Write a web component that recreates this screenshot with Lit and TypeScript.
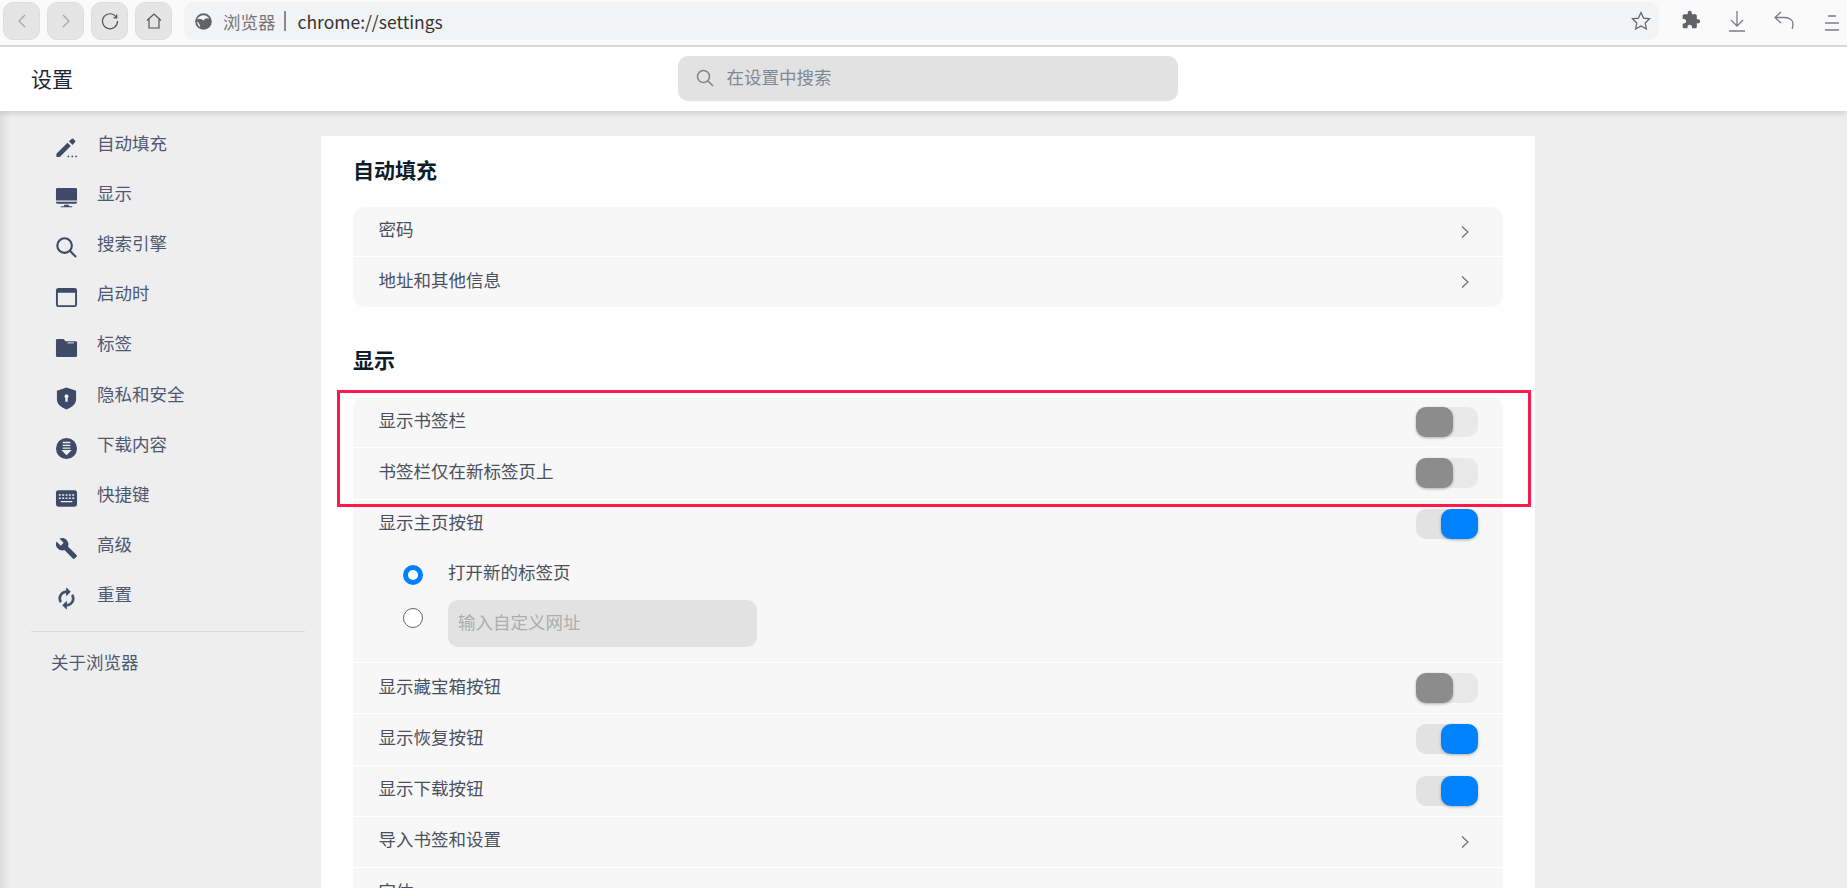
import { LitElement, html, css, svg } from 'lit';
import { customElement } from 'lit/decorators.js';

const NAV = [
  { label: '自动填充', icon: svg`<path d="M1.500 18.500V22h3.500L16.500 10.500l-3.500-3.500L1.500 18.500zM21 6.300a1 1 0 0 0 0-1.400L19 2.900a1 1 0 0 0-1.400 0l-3.100 2.600 3.800 3.800L21 6.300z"/><circle cx="14" cy="21.300" r=".9"/><circle cx="18" cy="21.300" r=".9"/><circle cx="22" cy="21.300" r=".9"/>` },
  { label: '显示', icon: svg`<path d="M2.500 2h19A1.500 1.500 0 0 1 23 3.500V15H1V3.500A1.500 1.500 0 0 1 2.500 2zM1 16.500h22V17a1.500 1.500 0 0 1-1.500 1.500h-19A1.500 1.500 0 0 1 1 17zM9.500 19.500h5V21H18v1.200H6V21h3.500z"/>` },
  { label: '搜索引擎', icon: svg`<circle cx="10" cy="10" r="7.600" fill="none" stroke="currentColor" stroke-width="2.200"/><path d="M15.500 15.500l6.500 6.500" fill="none" stroke="currentColor" stroke-width="2.200"/>` },
  { label: '启动时', icon: svg`<path fill-rule="evenodd" d="M3.500 2h17A2.500 2.500 0 0 1 23 4.500v15a2.500 2.500 0 0 1-2.500 2.500h-17A2.500 2.500 0 0 1 1 19.500v-15A2.500 2.500 0 0 1 3.500 2zM3 7v12.500c0 .300.200.500.500.500h17c.300 0 .500-.200.500-.500V7z"/>` },
  { label: '标签', icon: svg`<path d="M2.500 3H9l2 2.500h10.500A1.500 1.500 0 0 1 23 7v13.500a1.500 1.500 0 0 1-1.500 1.500h-19A1.500 1.500 0 0 1 1 20.500v-16A1.500 1.500 0 0 1 2.500 3z"/><path d="M13 7.200h6.500" stroke="#eee" stroke-width="1" fill="none"/>` },
  { label: '隐私和安全', icon: svg`<path fill-rule="evenodd" d="M12 .5l10 3.500v9c0 4.500-4 8-10 10.500C6 21 2 17.500 2 13V4zM12 7.500a2.200 2.200 0 0 0-1.200 4v3.800h2.400v-3.800a2.200 2.200 0 0 0-1.200-4z"/>` },
  { label: '下载内容', icon: svg`<path fill-rule="evenodd" d="M12 1a11 11 0 1 1 0 22 11 11 0 0 1 0-22zM8 5v1.500h8V5zM8 8v1.500h8V8zM8 11v1.200h8V11zM6.500 13.500L12 19l5.500-5.500z"/>` },
  { label: '快捷键', icon: svg`<path fill-rule="evenodd" d="M3 3.500h18A2.500 2.500 0 0 1 23 6v12a2.500 2.500 0 0 1-2.500 2.500h-17A2.500 2.500 0 0 1 1 18V6a2.500 2.500 0 0 1 2-2.500zM4 7.500V9h2V7.500zM7.500 7.500V9h2V7.500zM11 7.500V9h2V7.500zM14.500 7.500V9h2V7.500zM18 7.500V9h2V7.500zM4 11v1.500h2V11zM7.500 11v1.500h2V11zM11 11v1.500h2V11zM14.500 11v1.500h2V11zM18 11v1.500h2V11zM6 14.500V16h12v-1.500z"/>` },
  { label: '高级', icon: svg`<path d="M22.700 19l-9.100-9.100c.9-2.300.4-5-1.500-6.900-2-2-5-2.400-7.400-1.300L9 6 6 9 1.600 4.700C.4 7.100.9 10.100 2.900 12.100c1.900 1.900 4.600 2.400 6.900 1.500l9.100 9.100c.4.400 1 .4 1.400 0l2.300-2.300c.5-.4.5-1.100.1-1.400z"/>` },
  { label: '重置', icon: svg`<path d="M12 6v3l4-4-4-4v3c-4.420 0-8 3.580-8 8 0 1.570.46 3.030 1.240 4.260L6.700 14.800c-.45-.83-.7-1.790-.7-2.800 0-3.310 2.690-6 6-6zm6.760 1.740L17.300 9.200c.44.84.7 1.790.7 2.800 0 3.310-2.690 6-6 6v-3l-4 4 4 4v-3c4.420 0 8-3.580 8-8 0-1.570-.46-3.030-1.240-4.260z" stroke="currentColor" stroke-width=".8"/>` },
];

const chevron = html`<svg class="chev" viewBox="0 0 12 16"><path d="M3 2.500l6 5.500-6 5.500" /></svg>`;

const toggle = (on: boolean) => html`<span class="toggle ${on ? 'on' : ''}"><span class="knob"></span></span>`;

@customElement('app-root')
export class AppRoot extends LitElement {
  static styles = css`
    :host {
      display: flex;
      flex-direction: column;
      height: 100vh;
      overflow: hidden;
      background: #eee;
      color: #4a5060;
      font-family: "Noto Sans CJK SC", "Noto Sans", sans-serif;
      font-size: 17.500px;
    }
    svg { display: block; }

    /* browser chrome */
    .toolbar {
      flex: none;
      box-sizing: border-box;
      height: 47px;
      padding: 2px 0 0 3px;
      display: flex;
      background: #fafafa;
      border-bottom: 2px solid #dcdce0;
    }
    .tb-btn {
      box-sizing: border-box;
      width: 37px;
      height: 38px;
      margin-right: 7px;
      border: 1px solid #dedede;
      border-radius: 10px;
      background: #e5e5e5;
      display: flex;
      align-items: center;
      justify-content: center;
    }
    .tb-btn svg { fill: none; stroke: #555; stroke-width: 1.200; }
    .tb-btn.off svg { stroke: #a5a5a5; }
    .omnibox {
      width: 1475px;
      height: 38px;
      margin-left: 5px;
      box-sizing: border-box;
      padding: 0 7px 0 11px;
      display: flex;
      align-items: center;
      background: #f1f3f5;
      border-radius: 10px;
    }
    .globe { margin-right: 11px; }
    .site { color: #777; }
    .omni-sep { width: 2px; height: 20px; background: #8a8a8a; margin: 0 12px 0 8px; }
    .url { flex: 1; color: #333; }
    .star { fill: none; stroke: #5f6368; stroke-width: 1.200; }
    .tb-icons { display: flex; align-items: center; margin-left: 22px; gap: 27px; height: 38px; }
    .puzzle { fill: #5f6368; margin-top: -2px; }
    .line-ic { fill: none; stroke: #7a7d82; stroke-width: 1.300; }
    .menu-ic { margin: 3px 0 0 3px; }

    /* settings header */
    .header {
      flex: none;
      position: relative;
      z-index: 2;
      height: 64px;
      display: flex;
      align-items: center;
      background: #fff;
      box-shadow: 0 2px 6px rgba(0, 0, 0, 0.14);
    }
    .header h1 {
      width: 646.500px;
      margin: 0 0 2px 31px;
      font-size: 21px;
      font-weight: 400;
      color: #1c2733;
    }
    .search {
      box-sizing: border-box;
      width: 500.500px;
      height: 45px;
      margin-bottom: 2px;
      padding-left: 17px;
      display: flex;
      align-items: center;
      gap: 12px;
      background: #e2e2e2;
      border-radius: 10px;
      color: #7f8794;
    }
    .search svg { fill: none; stroke: #858585; stroke-width: 1.600; }
    .search span { margin-bottom: 3px; }

    /* body */
    .body {
      flex: 1;
      min-height: 0;
      display: grid;
      grid-template-columns: 321px 1214px;
    }
    .side {
      padding: 11px 16px 0 31px;
      background: linear-gradient(90deg, #dcdcdc 0, #eee 10px);
    }
    .nav-item {
      height: 50.200px;
      display: flex;
      align-items: center;
      gap: 19px;
      padding-left: 24px;
      color: #4f5873;
    }
    .nav-item span { margin-bottom: 10px; }
    .nav-item svg { width: 23px; height: 23px; fill: #3f4a69; color: #3f4a69; }
    .side hr {
      margin: 7px 0 0;
      border: 0;
      border-top: 1px solid #d9d9d9;
    }
    .about { margin: 17px 0 0 20px; color: #4f5873; }

    .main {
      margin-top: 25px;
      padding: 0 32px;
      background: #fff;
      overflow: hidden;
    }
    .main h2 {
      margin: 0;
      height: 71px;
      padding-top: 15px;
      box-sizing: border-box;
      font-size: 21px;
      font-weight: 700;
      line-height: 36px;
      color: #0f1c2a;
    }
    .group {
      margin-bottom: 19px;
      background: #f7f7f7;
      border-radius: 12px;
    }
    .row {
      box-sizing: border-box;
      height: 51.250px;
      padding: 0 25px 0 25.500px;
      display: flex;
      align-items: center;
      justify-content: space-between;
      border-bottom: 1px solid #fff;
    }
    .row > span:first-child { margin-bottom: 6px; }
    .row:last-child { border-bottom: 0; }
    .group.compact .row { height: 50px; }
    .chev { width: 12px; height: 16px; fill: none; stroke: #666; stroke-width: 1.100; margin-right: 7px; }

    .toggle {
      position: relative;
      width: 62px;
      height: 30px;
      border-radius: 10px;
      background: #e9e9e9;
    }
    .toggle.on { background: #e2e2e2; }
    .knob {
      position: absolute;
      left: 0;
      top: 0;
      width: 37px;
      height: 30px;
      border-radius: 10px;
      background: #8c8c8c;
      box-shadow: 0 1px 3px rgba(0, 0, 0, 0.3);
    }
    .toggle.on .knob { left: 25px; background: #0082ff; }

    .home-opts {
      box-sizing: border-box;
      height: 163.500px;
      border-bottom: 1px solid #fff;
    }
    .home-opts .row { border-bottom: 0; height: 49px; }
    .radio-line {
      display: flex;
      align-items: center;
      padding-left: 50px;
      gap: 25px;
    }
    .radio-line.first { height: 42px; margin-top: 5px; }
    .radio-line.first span:last-child { margin-bottom: 7px; }
    .radio-line.second { align-items: flex-start; margin-top: 4px; }
    .radio {
      box-sizing: border-box;
      width: 20px;
      height: 20px;
      border-radius: 50%;
      background: #fff;
      border: 1px solid #666;
    }
    .radio.checked { border: 5.500px solid #0082ff; }
    .radio-line.second .radio { margin-top: 8px; }
    .url-input {
      box-sizing: border-box;
      width: 309px;
      height: 47px;
      padding: 0 0 4px 10px;
      display: flex;
      align-items: center;
      background: #e2e2e2;
      border-radius: 10px;
      color: #adadad;
    }

    /* highlight drawn over the screenshot */
    .mark {
      position: absolute;
      left: 337px;
      top: 390px;
      box-sizing: border-box;
      width: 1194px;
      height: 117px;
      border: 3px solid #ff1a4b;
      pointer-events: none;
    }
  `;

  render() {
    return html`
      <div class="toolbar">
        <div class="tb-btn off"><svg width="16" height="18" viewBox="0 0 16 18"><path d="M11 3L5 9l6 6"/></svg></div>
        <div class="tb-btn off"><svg width="16" height="18" viewBox="0 0 16 18"><path d="M5 3l6 6-6 6"/></svg></div>
        <div class="tb-btn"><svg width="20" height="20" viewBox="0 0 20 20"><path d="M16.500 6.500A7.500 7.500 0 1 0 17.500 10M13.500 6.800h3.200V3.500"/></svg></div>
        <div class="tb-btn"><svg width="20" height="20" viewBox="0 0 20 20"><path d="M3 9.500L10 3l7 6.500M5 8.500V17h10V8.500"/></svg></div>
        <div class="omnibox">
          <svg class="globe" width="17" height="17" viewBox="0 0 17 17"><circle cx="8.500" cy="8.500" r="8.300" fill="#5f6368"/><path d="M2.200 6.500C3 3.800 5.500 2.200 8.500 2.200c2.500 0 4.700 1.400 5.700 3.500-1.500-.8-3.500-.7-4.500.3-.5.500-.7 1-.7 1.700C7.500 6.400 4.500 5.600 2.200 6.500z" fill="#f4f4f4"/><path d="M2.100 8.200c1.500 1.200 3 3.500 3.200 6-1.900-1.200-3.200-3.400-3.200-6z" fill="#f4f4f4"/></svg>
          <span class="site">浏览器</span>
          <span class="omni-sep"></span>
          <span class="url">chrome://settings</span>
          <svg class="star" width="22" height="22" viewBox="0 0 22 22"><path d="M11 2.500l2.600 5.600 6 .7-4.400 4.200 1.200 6L11 16l-5.400 3 1.200-6-4.400-4.200 6-.7z"/></svg>
        </div>
        <div class="tb-icons">
          <svg class="puzzle" width="20" height="20" viewBox="0 0 24 24"><path d="M20.500 11H19V7c0-1.100-.9-2-2-2h-4V3.500C13 2.120 11.880 1 10.500 1S8 2.120 8 3.500V5H4c-1.100 0-1.990.9-1.990 2v3.800H3.500c1.490 0 2.700 1.210 2.700 2.700s-1.210 2.700-2.700 2.700H2V20c0 1.100.9 2 2 2h3.800v-1.500c0-1.490 1.210-2.700 2.700-2.700 1.490 0 2.700 1.210 2.700 2.700V22H17c1.100 0 2-.9 2-2v-4h1.500c1.380 0 2.500-1.120 2.500-2.500S21.880 11 20.500 11z"/></svg>
          <svg class="line-ic" width="18" height="24" viewBox="0 0 18 24"><path d="M9 2v15M3 11l6 6 6-6M1 22h16"/></svg>
          <svg class="line-ic" width="22" height="22" viewBox="0 0 22 22"><path d="M8 2L2 7.500l6 5.500M2 7.500h10c4.500 0 8 2.500 8 6.500 0 2-.3 3.500-1 5"/></svg>
          <svg class="line-ic menu-ic" width="14" height="18" viewBox="0 0 14 18"><path d="M3 2h8M0 9h14M0 16h14"/></svg>
        </div>
      </div>

      <div class="header">
        <h1>设置</h1>
        <div class="search">
          <svg width="20" height="20" viewBox="0 0 20 20"><circle cx="8.500" cy="8.500" r="6"/><path d="M13 13l5 5"/></svg>
          <span>在设置中搜索</span>
        </div>
      </div>

      <div class="body">
        <nav class="side">
          ${NAV.map(n => html`
            <div class="nav-item">
              <svg viewBox="0 0 24 24">${n.icon}</svg>
              <span>${n.label}</span>
            </div>
          `)}
          <hr />
          <div class="about">关于浏览器</div>
        </nav>

        <main class="main">
          <h2>自动填充</h2>
          <div class="group compact">
            <div class="row"><span>密码</span>${chevron}</div>
            <div class="row"><span>地址和其他信息</span>${chevron}</div>
          </div>

          <h2>显示</h2>
          <div class="group">
            <div class="row"><span>显示书签栏</span>${toggle(false)}</div>
            <div class="row"><span>书签栏仅在新标签页上</span>${toggle(false)}</div>
            <div class="home-opts">
              <div class="row"><span>显示主页按钮</span>${toggle(true)}</div>
              <div class="radio-line first"><span class="radio checked"></span><span>打开新的标签页</span></div>
              <div class="radio-line second"><span class="radio"></span><div class="url-input">输入自定义网址</div></div>
            </div>
            <div class="row"><span>显示藏宝箱按钮</span>${toggle(false)}</div>
            <div class="row"><span>显示恢复按钮</span>${toggle(true)}</div>
            <div class="row"><span>显示下载按钮</span>${toggle(true)}</div>
            <div class="row"><span>导入书签和设置</span>${chevron}</div>
            <div class="row"><span>字体</span></div>
          </div>
        </main>
      </div>

      <div class="mark"></div>
    `;
  }
}
